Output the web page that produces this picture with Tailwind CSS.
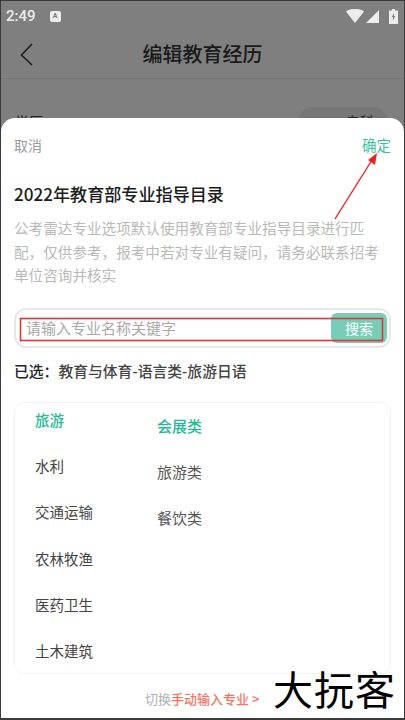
<!DOCTYPE html>
<html lang="zh-CN">
<head>
    <meta charset="UTF-8">
    <meta name="viewport" content="width=device-width, initial-scale=1.0">
    <script src="https://cdn.jsdelivr.net/npm/@tailwindcss/browser@4"></script>
    <title>编辑教育经历</title>
</head>
<body class="bg-[#7f7f7f] font-['Noto_Sans_CJK_SC','Noto_Sans',sans-serif]">

<div class="relative w-[405px] h-[720px] overflow-hidden flex flex-col border-l border-r border-t border-[#3a3a3a] border-b-2">

    <!-- Status bar -->
    <div class="h-[28px] shrink-0 flex items-center justify-between pl-[5px] pr-[6px] pt-[2px]">
        <div class="flex items-center gap-[14px]">
            <span class="text-[15px] leading-none font-medium text-[#ececec] font-['Roboto',sans-serif]">2:49</span>
            <span class="w-[11px] h-[11px] rounded-[2px] bg-[#ececec] text-[7px] leading-[11px] text-center font-bold text-[#777] font-['Roboto',sans-serif]">A</span>
        </div>
        <div class="flex items-center gap-[2px]">
            <svg width="18" height="14" viewBox="0 0 18 14"><path d="M0 2.5C5-1 13-1 18 2.5L9 14z" fill="#ececec"/></svg>
            <svg width="13" height="13" viewBox="0 0 13 13"><path d="M13 0V13H0z" fill="#ececec"/></svg>
            <svg class="ml-[8px]" width="9" height="15" viewBox="0 0 9 15"><path d="M3 0H6V1.5H9V15H0V1.5H3z" fill="#ececec"/><path d="M5 4L2.8 8H4.2L3.8 11.5L6.2 7H4.8z" fill="#777"/></svg>
        </div>
    </div>

    <!-- Header -->
    <div class="relative h-[50px] shrink-0 flex items-center justify-center border-b border-[#767676]">
        <svg class="absolute left-[18px] top-[13px]" width="16" height="24" viewBox="0 0 16 24" fill="none" stroke="#1f1f1f" stroke-width="1.6"><path d="M13 2L2.5 13L13 23"/></svg>
        <h1 class="text-[20px] leading-none font-medium text-[#1a1a1a] pt-[1px]">编辑教育经历</h1>
    </div>

    <!-- Row behind the sheet -->
    <div class="h-[39px] shrink-0 flex justify-between pl-[14px] pr-[16px] pt-[35px] text-[14px] leading-none text-[#222]">
        <span>学历</span>
        <span class="relative px-[20px] pr-[14px]">
            <span class="absolute right-0 top-[-7px] w-[90px] h-[30px] rounded-full bg-[#777]"></span>
            <span class="relative">专科</span>
        </span>
    </div>

    <!-- Bottom sheet -->
    <div class="flex-1 bg-white rounded-t-[14px] px-[13px] relative">
        <div class="flex justify-between pt-[17px] text-[14px] leading-[20px]">
            <span class="text-[#9a9a9a]">取消</span>
            <span class="text-[#3dbfa0] text-[14.5px]">确定</span>
        </div>
        <h2 class="mt-[27px] text-[17.1px] leading-[24px] font-medium text-[#1c1c1c]">2022年教育部专业指导目录</h2>
        <p class="mt-[10px] text-[14.6px] leading-[23.5px] text-[#b9b9b9]">公考雷达专业选项默认使用教育部专业指导目录进行匹配，仅供参考，报考中若对专业有疑问，请务必联系招考单位咨询并核实</p>

        <!-- Search -->
        <div class="mt-[21px] h-[40px] rounded-[12px] border-2 border-[#e8e8ec] flex items-center justify-between pl-[10px] pr-[2px]">
            <span class="text-[15px] leading-none text-[#a8a8a8]">请输入专业名称关键字</span>
            <span class="w-[56px] h-[30px] rounded-[6px] bg-[#78cdb6] text-white text-[14px] leading-[30px] text-center">搜索</span>
        </div>

        <p class="mt-[13px] text-[14.8px] leading-[20px] font-medium text-[#444]"><span class="text-[#222]">已选：</span>教育与体育-语言类-旅游日语</p>

        <!-- Category picker -->
        <div class="mt-[21px] h-[272px] rounded-[10px] border border-[#f3f3f3] flex pl-[20px]">
            <div class="w-[122px] flex flex-col text-[14.5px] leading-[20px] text-[#444] gap-[26.4px] pt-[7px]">
                <span class="text-[#25b998] font-medium">旅游</span>
                <span>水利</span>
                <span>交通运输</span>
                <span>农林牧渔</span>
                <span>医药卫生</span>
                <span>土木建筑</span>
            </div>
            <div class="flex flex-col text-[15px] leading-[20px] text-[#555] gap-[26px] pt-[13px]">
                <span class="text-[#25b998] font-medium">会展类</span>
                <span>旅游类</span>
                <span>餐饮类</span>
            </div>
        </div>
    </div>

    <!-- Footer link, lies on the sheet -->
    <p class="absolute left-[144px] top-[690px] text-[13px] leading-[16px] text-[#b0b0b0]">切换<span class="text-[#f4755f] font-medium">手动输入专业 &gt;</span></p>

    <!-- Watermark -->
    <span class="absolute left-[272px] top-[663px] text-[40px] leading-[48px] text-black tracking-[1px]">大抏客</span>

    <!-- Red annotations -->
    <svg class="absolute left-0 top-0" width="405" height="720" viewBox="0 0 405 720" fill="none">
        <rect x="19.5" y="317.5" width="362" height="22" stroke="#e0353a" stroke-width="1.6"/>
        <path d="M334 218L371 159" stroke="#f02020" stroke-width="1.4"/>
        <path d="M376 152L374 164L367 159z" fill="#f02020"/>
    </svg>
</div>

</body>
</html>
